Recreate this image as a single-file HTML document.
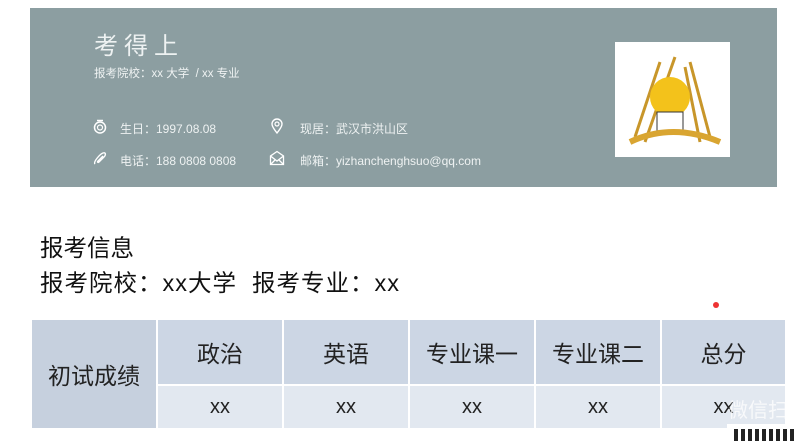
<!DOCTYPE html>
<html><head><meta charset="utf-8"><style>
*{margin:0;padding:0;box-sizing:border-box}
body{width:799px;height:441px;background:#fff;position:relative;overflow:hidden;font-family:"Liberation Sans","Noto Sans CJK SC",sans-serif}
.banner{position:absolute;left:30px;top:8px;width:747px;height:179px;background:#8c9ea1;color:#fff}
.t{position:absolute;white-space:nowrap}
.photo{position:absolute;left:615px;top:42px;width:115px;height:115px;background:#fff}
.cell{position:absolute;display:flex;align-items:center;justify-content:center;font-size:23px;color:#222}
</style></head><body>
<div class="banner">
<div class="t" style="left:64px;top:18px;font-size:24px;letter-spacing:6px;color:#eef2f2">考得上</div>
<div class="t" style="left:64px;top:57px;font-size:11.5px;color:#eef2f2">报考院校：xx 大学 &nbsp;/ xx 专业</div>
<svg class="t" style="left:63px;top:111px" width="14" height="15" viewBox="0 0 14 15"><circle cx="7" cy="8.5" r="5.5" fill="none" stroke="#fff" stroke-width="1.5"/><circle cx="7" cy="8.5" r="2.5" fill="none" stroke="#fff" stroke-width="1.2"/><path d="M4 1.5h6" stroke="#fff" stroke-width="1.5"/></svg>
<div class="t" style="left:90px;top:112px;font-size:12px;color:#eef2f2">生日：1997.08.08</div>
<svg class="t" style="left:240px;top:110px" width="14" height="16" viewBox="0 0 14 16"><path d="M7 15C3 10 2 8 2 6a5 5 0 0 1 10 0c0 2-1 4-5 9z" fill="none" stroke="#fff" stroke-width="1.4"/><circle cx="7" cy="6" r="2" fill="none" stroke="#fff" stroke-width="1.2"/></svg>
<div class="t" style="left:270px;top:112px;font-size:12px;color:#eef2f2">现居：武汉市洪山区</div>
<svg class="t" style="left:63px;top:143px" width="15" height="15" viewBox="0 0 15 15"><path d="M2 13c-2-2 5-10 8-11 3-1 3 2 1 4l-5 5c-1 1-2 0-1-1l5-5" fill="none" stroke="#fff" stroke-width="1.4"/></svg>
<div class="t" style="left:90px;top:144px;font-size:12px;color:#eef2f2">电话：188 0808 0808</div>
<svg class="t" style="left:239px;top:142px" width="16" height="16" viewBox="0 0 16 16"><path d="M1.5 6v8.5h13V6L8 1.5z M1.5 14.5L6.5 9.5 M14.5 14.5L9.5 9.5 M1.5 6L8 11 14.5 6" fill="none" stroke="#fff" stroke-width="1.3"/></svg>
<div class="t" style="left:270px;top:144px;font-size:12px;color:#eef2f2">邮箱：yizhanchenghsuo@qq.com</div>
</div>
<div class="photo"><svg width="115" height="115" viewBox="0 0 115 115"><g stroke="#c8962a" stroke-width="3"><path d="M20 95L45 20M30 100L60 15M95 95L75 20M85 100L70 25"/></g><circle cx="55" cy="55" r="20" fill="#f3c21b"/><rect x="42" y="70" width="26" height="22" fill="#fff" stroke="#333"/><path d="M15 100Q57 80 105 100" stroke="#d9a531" stroke-width="6" fill="none"/></svg></div>
<div class="t" style="left:40px;top:229px;font-size:23.5px;color:#111">报考信息</div>
<div class="t" style="left:40px;top:264px;font-size:23.5px;letter-spacing:1px;color:#111">报考院校：xx大学&nbsp;&nbsp;报考专业：xx</div>
<div style="position:absolute;left:713px;top:302px;width:6px;height:6px;border-radius:50%;background:#e33"></div>
<div class="cell" style="left:32px;top:320px;width:124px;height:108px;background:#c6d0de">初试成绩</div>
<div class="cell" style="left:158px;top:320px;width:124px;height:64px;background:#ccd6e4">政治</div>
<div class="cell" style="left:284px;top:320px;width:124px;height:64px;background:#ccd6e4">英语</div>
<div class="cell" style="left:410px;top:320px;width:124px;height:64px;background:#ccd6e4">专业课一</div>
<div class="cell" style="left:536px;top:320px;width:124px;height:64px;background:#ccd6e4">专业课二</div>
<div class="cell" style="left:662px;top:320px;width:123px;height:64px;background:#ccd6e4">总分</div>
<div class="cell" style="left:158px;top:386px;width:124px;height:42px;background:#e2e8f0;font-size:20px">xx</div>
<div class="cell" style="left:284px;top:386px;width:124px;height:42px;background:#e2e8f0;font-size:20px">xx</div>
<div class="cell" style="left:410px;top:386px;width:124px;height:42px;background:#e2e8f0;font-size:20px">xx</div>
<div class="cell" style="left:536px;top:386px;width:124px;height:42px;background:#e2e8f0;font-size:20px">xx</div>
<div class="cell" style="left:662px;top:386px;width:123px;height:42px;background:#e2e8f0;font-size:20px">xx</div>
<div class="t" style="left:728px;top:394px;font-size:20px;color:rgba(255,255,255,.75)">微信扫一</div>
<div style="position:absolute;left:727px;top:424px;width:72px;height:17px;background:#fff"><div style="position:absolute;left:7px;top:5px;width:60px;height:12px;background:repeating-linear-gradient(90deg,#222 0 4px,#fff 4px 7px)"></div></div>
</body></html>
